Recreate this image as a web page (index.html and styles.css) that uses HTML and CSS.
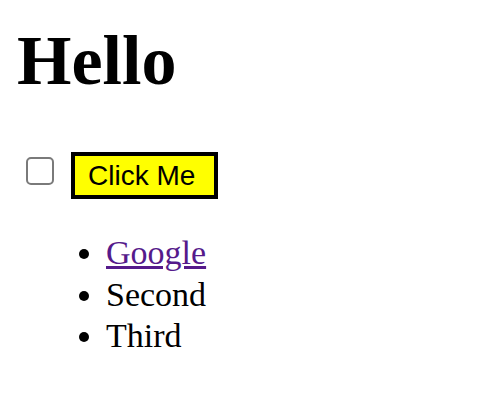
FILE: index.html
```html
<!DOCTYPE html>
<html>
<head>
<meta charset="utf-8">
<link rel="stylesheet" href="styles.css">
</head>
<body>
<div class="page">
  <h1 class="title">Hello</h1>
  <div class="row">
    <input type="checkbox" class="check">
    <button class="btn">Click Me</button>
  </div>
  <ul class="list">
    <li><a href="#" class="link">Google</a></li>
    <li>Second</li>
    <li>Third</li>
  </ul>
</div>
</body>
</html>
```
FILE: styles.css
```css
html, body {
  margin: 0;
  padding: 0;
  background: #ffffff;
}
.page {
  padding: 0 17px;
  font-family: "Liberation Serif", "Times New Roman", serif;
  color: #000;
}
.title {
  margin: 21px 0 0;
  font-size: 70px;
  line-height: 80px;
  font-weight: bold;
}
.row {
  display: flex;
  align-items: flex-start;
  margin-top: 51px;
}
.check {
  appearance: none;
  -webkit-appearance: none;
  box-sizing: border-box;
  width: 28px;
  height: 28px;
  margin: 5px 17px 0 9px;
  border: 2px solid #7a7a7a;
  border-radius: 5px;
  background: #fff;
}
.btn {
  box-sizing: border-box;
  width: 147px;
  height: 47px;
  margin: 0;
  padding: 0 0 0 13px;
  text-align: left;
  background: #ffff00;
  border: 4px solid #000;
  font-family: "Liberation Sans", Arial, sans-serif;
  font-size: 28px;
  line-height: normal;
  color: #000;
}
.list {
  margin: 33px 0 0;
  padding-left: 89px;
  font-size: 34px;
  line-height: 41.5px;
}
.link {
  color: #551a8b;
  text-decoration: underline;
}
```
